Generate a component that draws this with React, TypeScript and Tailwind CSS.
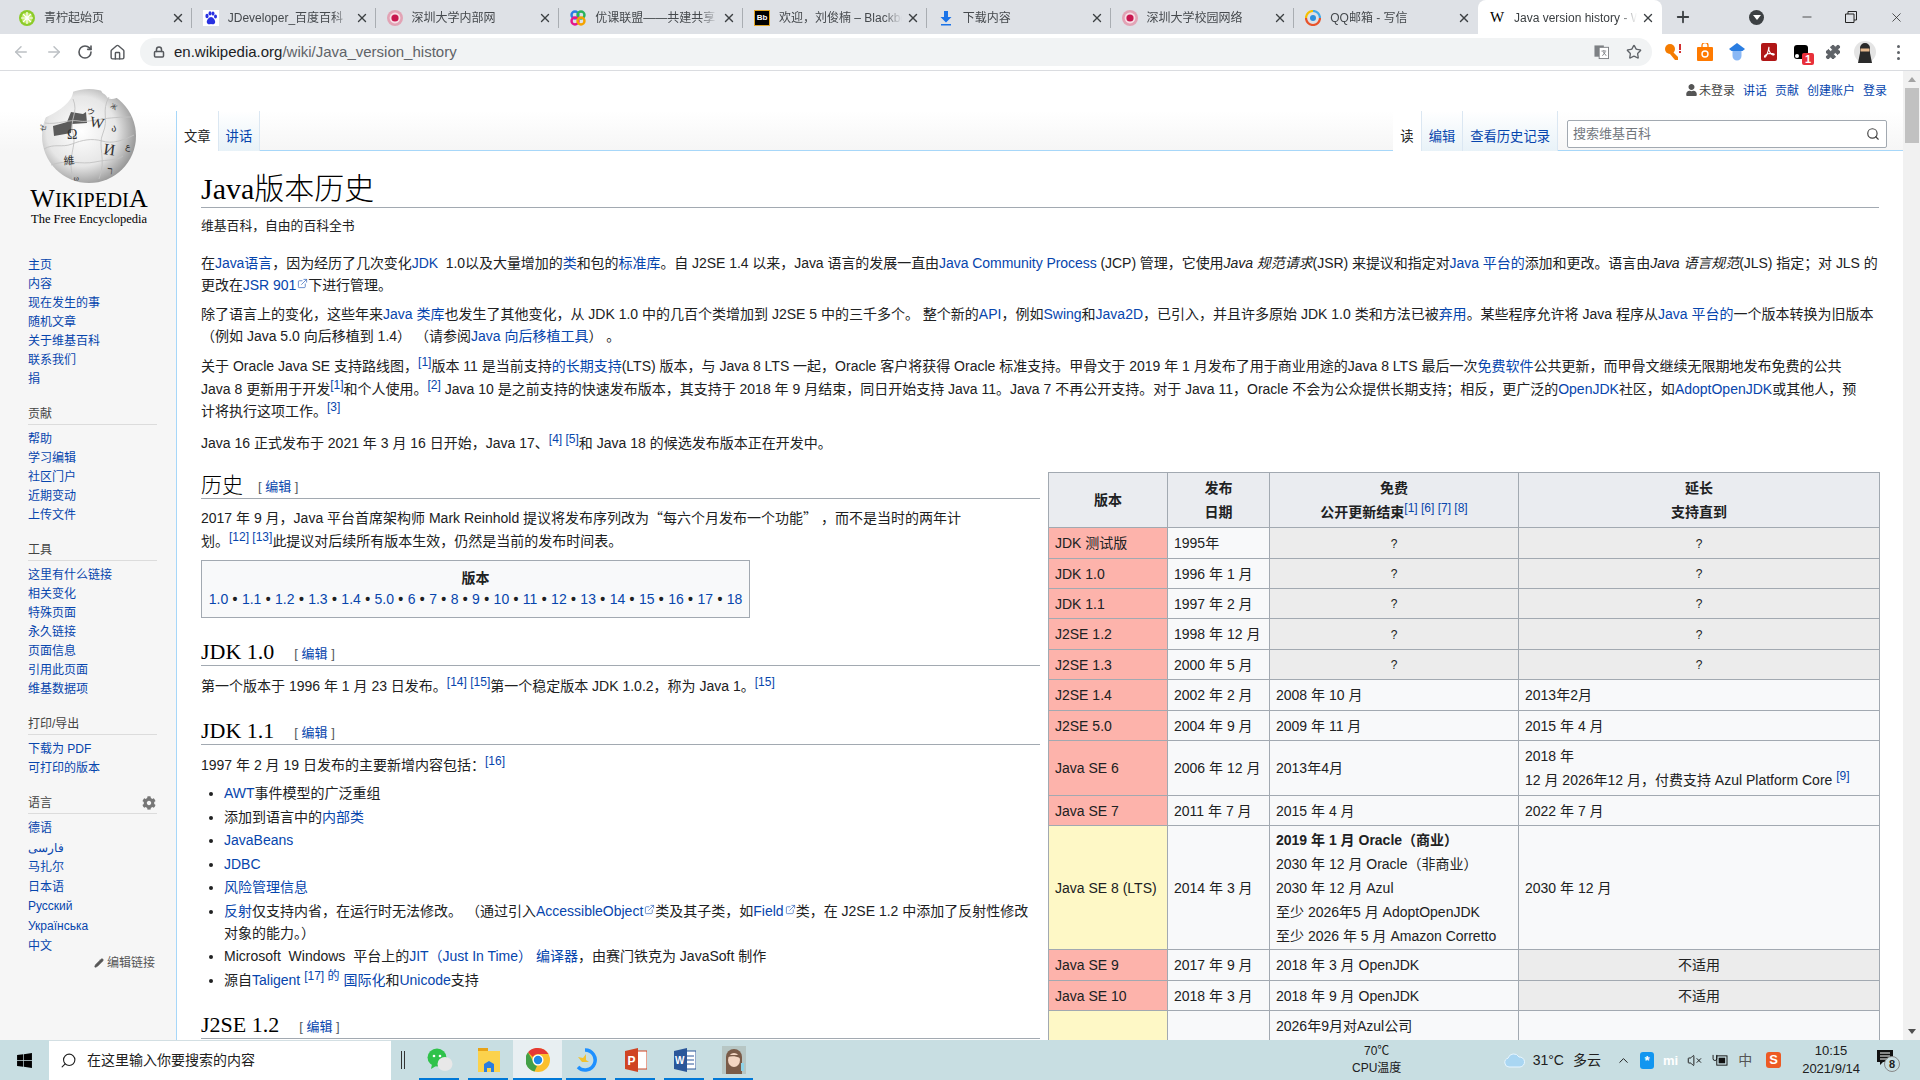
import React from 'react';
import { ArrowLeft, ArrowRight, RotateCw, Home, Lock, Star, Puzzle, Search, Plus, X, Minus, Pencil, ChevronUp, ExternalLink, VolumeX } from 'lucide-react';
import { FaWindows, FaUser, FaCog } from 'react-icons/fa';

const L = ({ children }: { children: React.ReactNode }) => <a className="text-[#0645ad]">{children}</a>;
const Sup = ({ children }: { children: React.ReactNode }) => <sup className="text-[#0645ad] text-[12px] leading-none top-0 align-[5px] not-italic font-normal">{children}</sup>;
const Ext = () => <ExternalLink className="inline-block w-[11px] h-[11px] text-[#3366bb] align-[1px] ml-[1px]" strokeWidth={1.6} />;
const Q = ({ children }: { children: React.ReactNode }) => <span className="font-['Noto_Sans_CJK_SC',sans-serif]">{children}</span>;

const Pink = () => (
  <svg viewBox="0 0 16 16" className="w-4 h-4"><circle cx="8" cy="8" r="8" fill="#e2a3b5" /><circle cx="8" cy="8" r="5.4" fill="#f6dfe6" /><circle cx="8" cy="8" r="3.6" fill="#c8174f" /></svg>
);
const favicons: React.ReactNode[] = [
  <svg viewBox="0 0 16 16" className="w-4 h-4"><circle cx="8" cy="8" r="8" fill="#8ccb2a" /><circle cx="8" cy="8" r="5.5" fill="#c5e96b" /><path d="M8 2v12M2 8h12M4 4l8 8M12 4l-8 8" stroke="#fff" strokeWidth="1.2" /></svg>,
  <svg viewBox="0 0 16 16" className="w-4 h-4"><rect width="16" height="16" fill="#fff" /><ellipse cx="4" cy="6" rx="1.6" ry="2.2" fill="#2932e1" /><ellipse cx="7" cy="3.4" rx="1.5" ry="2.1" fill="#2932e1" /><ellipse cx="10" cy="3.6" rx="1.5" ry="2.1" fill="#2932e1" /><ellipse cx="12.5" cy="6.5" rx="1.5" ry="2.1" fill="#2932e1" /><path d="M8 7c-2 0-5 3.500-4 6 1 2 3 1 4 1s3 1 4-1c1-2.500-2-6-4-6z" fill="#2932e1" /></svg>,
  <Pink />,
  <svg viewBox="0 0 16 16" className="w-4 h-4" fill="none" strokeWidth="2.4"><circle cx="5" cy="5" r="3.5" stroke="#2a7de1" /><circle cx="11" cy="5" r="3.500" stroke="#29b35b" /><circle cx="5" cy="11" r="3.500" stroke="#e5168a" /><circle cx="11" cy="11" r="3.500" stroke="#f5a300" /></svg>,
  <div className="w-4 h-4 bg-black border border-[#e0a526] flex items-center justify-center text-white text-[8px] font-bold leading-none">Bb</div>,
  <svg viewBox="0 0 16 16" className="w-4 h-4"><path d="M6 1h4v6h3.500L8 12.500 2.500 7H6zM3 14h10v1.500H3z" fill="#1a73e8" /></svg>,
  <Pink />,
  <svg viewBox="0 0 16 16" className="w-4 h-4" fill="none"><path d="M8 1a7 7 0 0 0-7 7" stroke="#f6c000" strokeWidth="2.200" /><path d="M8 1a7 7 0 0 1 7 7" stroke="#43a9e8" strokeWidth="2.200" /><path d="M15 8a7 7 0 0 1-14 0" stroke="#e8532b" strokeWidth="2.200" /><circle cx="8" cy="8" r="3" fill="#2e8fdc" /></svg>,
  <span className="w-4 h-4 flex items-center justify-center text-[15px] leading-none text-black font-['Liberation_Serif',serif]">W</span>,
];
const tabs = ['青柠起始页', 'JDeveloper_百度百科', '深圳大学内部网', '优课联盟——共建共享', '欢迎，刘俊楠 – Blackboard Learn', '下载内容', '深圳大学校园网络', 'QQ邮箱 - 写信', 'Java version history - Wikipedia'];

function TabStrip() {
  return (
    <div className="h-[34px] shrink-0 bg-[#dee1e6] flex items-stretch pl-[8px]">
      {tabs.map((t, i) => {
        const active = i === 8;
        const sepHidden = i === 7 || i === 8;
        return (
          <div key={i} className={`w-[183.75px] shrink-0 flex items-center pl-[11px] pr-[7px] pt-[1px] relative text-[12px] ${active ? 'bg-white rounded-t-[8px] text-[#3c4043]' : 'text-[#45494d]'}`}>
            <span className="w-4 h-4 shrink-0 mr-[9px] flex items-center justify-center">{favicons[i]}</span>
            <span className="flex-1 overflow-hidden whitespace-nowrap [mask-image:linear-gradient(to_right,#000_85%,transparent)]">{t}</span>
            <X className="w-[14px] h-[14px] shrink-0 ml-[4px] text-[#3c4043]" strokeWidth={2.4} />
            {!sepHidden && <span className="absolute right-0 top-[8px] h-[20px] w-px bg-[#a9adb2]" />}
          </div>
        );
      })}
      <div className="w-[42px] flex items-center justify-center"><Plus className="w-[18px] h-[18px] text-[#3c4043]" strokeWidth={2.4} /></div>
      <div className="flex-1 flex items-center justify-end pr-[16px]">
        <span className="w-[15px] h-[15px] rounded-full bg-[#3c4043] flex items-center justify-center mr-[36px]"><span className="w-0 h-0 border-x-[4px] border-x-transparent border-t-[5px] border-t-white" /></span>
        <Minus className="w-[14px] h-[14px] text-[#222] mr-[31px]" strokeWidth={1.3} />
        <svg viewBox="0 0 12 12" className="w-[12px] h-[12px] mr-[32px]" fill="none" stroke="#222"><path d="M3 3V.5h8.500V9H9M.5 3h8.500v8.500H.5z" /></svg>
        <X className="w-[15px] h-[15px] text-[#222]" strokeWidth={1.2} />
      </div>
    </div>
  );
}

function Toolbar() {
  return (
    <div className="h-[37px] shrink-0 bg-white border-b border-[#dadce0] flex items-center pl-[12px]">
      <ArrowLeft className="w-[18px] h-[18px] text-[#bcc0c4] mr-[15px]" strokeWidth={2} />
      <ArrowRight className="w-[18px] h-[18px] text-[#bcc0c4] mr-[14px]" strokeWidth={2} />
      <RotateCw className="w-[16px] h-[16px] text-[#55585c] mr-[16px]" strokeWidth={2.4} />
      <Home className="w-[17px] h-[17px] text-[#55585c] mr-[14px]" strokeWidth={2} />
      <div className="w-[1512px] shrink-0 h-[28px] rounded-full bg-[#f1f3f4] flex items-center pl-[13px] pr-[10px]">
        <Lock className="w-[12px] h-[12px] text-[#55585c] mr-[9px]" strokeWidth={3} />
        <span className="text-[15px] text-[#202124]">en.wikipedia.org<span className="text-[#5f6368]">/wiki/Java_version_history</span></span>
        <span className="flex-1" />
        <svg viewBox="0 0 16 16" className="w-[15px] h-[16px] mr-[17px]"><rect x="0.500" y="1" width="10" height="12" fill="#7d8084" /><rect x="5.500" y="3" width="10" height="12" fill="#fff" stroke="#7d8084" /><path d="M8 7h5M10.500 6v1M9 12l3-4M10 8l3 4" stroke="#7d8084" /></svg>
        <Star className="w-[16px] h-[16px] text-[#5f6368]" strokeWidth={2} />
      </div>
      <div className="flex items-center ml-[5px]">
        <span className="w-[32px] flex justify-center">
          <svg viewBox="0 0 18 18" className="w-[18px] h-[18px]"><circle cx="6" cy="6" r="5" fill="#f57c00" /><path d="M8 8l6 6v3h-3l-5-6z" fill="#f57c00" /><rect x="15" y="1" width="2" height="6" fill="#d32f2f" /><rect x="15" y="8" width="2" height="2" fill="#d32f2f" /></svg>
        </span>
        <span className="w-[32px] flex justify-center">
          <svg viewBox="0 0 16 18" className="w-[16px] h-[18px]"><rect y="4" width="16" height="14" rx="1" fill="#ff7a00" /><path d="M5 5V2.500a3 3 0 0 1 6 0V5" fill="none" stroke="#ff7a00" strokeWidth="1.300" /><circle cx="8" cy="11" r="3" fill="none" stroke="#fff" strokeWidth="1.400" /></svg>
        </span>
        <span className="w-[32px] flex justify-center">
          <svg viewBox="0 0 16 18" className="w-[16px] h-[18px]"><path d="M8 0l8 6-2.500 2h-11L0 6z" fill="#2a7de1" /><path d="M3.500 8h9v5a4.500 4.500 0 0 1-9 0z" fill="#8ab8f5" /></svg>
        </span>
        <span className="w-[32px] flex justify-center">
          <span className="w-[16px] h-[18px] bg-[#b01616] rounded-[2px] flex items-center justify-center">
            <svg viewBox="0 0 14 14" className="w-[12px] h-[12px]" fill="none" stroke="#fff" strokeWidth="1.300"><path d="M7 1c-1 3 0 5 1.500 7S12 11 13 10 9 8 6 9 1 12 2 13s4-5 5-12z" /></svg>
          </span>
        </span>
        <span className="w-[32px] flex justify-center relative">
          <span className="w-[14px] h-[14px] bg-black rounded-[3px] relative"><span className="absolute left-[1px] bottom-[1px] w-[4px] h-[4px] rounded-full bg-white" /></span>
          <span className="absolute left-[17px] top-[8px] w-[12px] h-[12px] rounded-[2px] bg-[#e8303a] text-white text-[11px] font-bold leading-[12px] text-center">1</span>
        </span>
        <span className="w-[32px] flex justify-center"><Puzzle className="w-[16px] h-[16px] text-[#5f6368] fill-[#5f6368]" strokeWidth={1.5} /></span>
        <span className="w-[32px] flex justify-center">
          <svg viewBox="0 0 22 22" className="w-[22px] h-[22px]"><circle cx="11" cy="11" r="11" fill="#e4e4e4" /><path d="M6 7a5 5 0 0 1 10 0v5l2 10H4l2-10z" fill="#2a2a2a" /><rect x="6.500" y="7.500" width="9" height="3" fill="#e7b98e" /></svg>
        </span>
        <span className="w-[34px] flex flex-col items-center gap-[3px]">
          <span className="w-[3px] h-[3px] rounded-full bg-[#5f6368]" /><span className="w-[3px] h-[3px] rounded-full bg-[#5f6368]" /><span className="w-[3px] h-[3px] rounded-full bg-[#5f6368]" />
        </span>
      </div>
    </div>
  );
}

function Globe() {
  const t = (x: number, y: number, s: string, size: number, r = 0) => (
    <text x={x} y={y} fontSize={size} fill="#333" fontFamily="'Liberation Serif','Noto Sans CJK SC',serif" transform={`rotate(${r} ${x} ${y})`}>{s}</text>
  );
  return (
    <svg viewBox="0 0 100 94" className="w-[100px] h-[94px]">
      <defs>
        <radialGradient id="wg" cx="42%" cy="45%" r="62%"><stop offset="0%" stopColor="#fff" /><stop offset="60%" stopColor="#e6e6e6" /><stop offset="100%" stopColor="#8d8d8d" /></radialGradient>
      </defs>
      <circle cx="50" cy="47" r="47" fill="url(#wg)" />
      <path d="M3 30C18 24 36 12 34 0H20L2 25zM62 0c0 5 4 4 6 8 3 4 10 1 14-1L72 0z" fill="#fff" />
      <path d="M14 37l14-4 4-10 12 2 3-2 1 11-15 1-1 9-17 3z" fill="#5b5b5b" />
      <g fill="none" stroke="#c2c2c2" strokeWidth="0.900">
        <path d="M5 60c10-6 18-1 28-5s20-6 30-3 20 0 32-6" />
        <path d="M34 10c6 14-4 20 0 34s-6 22 0 46" />
        <path d="M70 8c-8 14 0 22-6 36s4 26-4 46" />
        <path d="M6 34c12 2 24-4 34-2s22-4 52-4" />
        <path d="M12 76c16-6 30 0 44-3s22-1 28-6" />
      </g>
      {t(28, 50, 'Ω', 14)}
      {t(50, 37, 'W', 15, 12)}
      {t(64, 65, 'И', 16, 8)}
      {t(25, 76, '維', 11, -6)}
      {t(47, 24, 'ウ', 8, 20)}
      {t(72, 42, 'ა', 10, 10)}
      {t(6, 43, 'ゼ', 7, -80)}
      {t(68, 85, 'ר', 11, 6)}
      {t(35, 92, 'ω', 8, -10)}
      {t(86, 60, 'ع', 9, 10)}
      {t(71, 18, 'Ж', 7, 30)}
    </svg>
  );
}

const sideSections: { title?: string; items: string[]; gear?: boolean; mt: string; li: string }[] = [
  { items: ['主页', '内容', '现在发生的事', '随机文章', '关于维基百科', '联系我们', '捐'], mt: '', li: 'h-[19px] leading-[19px]' },
  { title: '贡献', items: ['帮助', '学习编辑', '社区门户', '近期变动', '上传文件'], mt: 'mt-[16px]', li: 'h-[19px] leading-[19px]' },
  { title: '工具', items: ['这里有什么链接', '相关变化', '特殊页面', '永久链接', '页面信息', '引用此页面', '维基数据项'], mt: 'mt-[16px]', li: 'h-[19px] leading-[19px]' },
  { title: '打印/导出', items: ['下载为 PDF', '可打印的版本'], mt: 'mt-[16px]', li: 'h-[19px] leading-[19px]' },
  { title: '语言', items: ['德语', 'فارسی', '马扎尔', '日本语', 'Русский', 'Українська', '中文'], gear: true, mt: 'mt-[16px]', li: 'h-[19.6px] leading-[19.6px]' },
];

function Sidebar() {
  return (
    <div className="w-[176px] shrink-0 bg-[#f6f6f6] bg-[linear-gradient(#fff_50%,#f6f6f6_100%)] bg-no-repeat bg-[length:100%_80px] text-[12px]">
      <div className="h-[185px] flex flex-col items-center pt-[18px] pl-[2px]">
        <Globe />
        <div className="mt-[5px] text-[26px] leading-[22px] text-black font-['Liberation_Serif',serif] whitespace-nowrap">W<span className="text-[20.500px]">IKIPEDI</span>A</div>
        <div className="mt-[1px] text-[12.500px] leading-[14px] text-black font-['Liberation_Serif',serif] whitespace-nowrap">The Free Encyclopedia</div>
      </div>
      <div className="pl-[28px] pr-[19px]">
        {sideSections.map((s, i) => (
          <div key={i} className={s.mt}>
            {s.title && (
              <div className="h-[20px] leading-[19px] border-b border-[#dcdcdc] text-[#444] flex justify-between items-center mb-[5px]">
                <span>{s.title}</span>
                {s.gear && <FaCog className="w-[14px] h-[14px] text-[#777] mr-[1px] -mt-[2px]" />}
              </div>
            )}
            <ul>{s.items.map((x) => <li key={x} className={`${s.li} text-[#0645ad] whitespace-nowrap`}>{x}</li>)}</ul>
          </div>
        ))}
        <div className="flex items-center justify-end gap-[3px] text-[#444] mr-[2px] h-[14px]">
          <Pencil className="w-[10px] h-[10px] text-[#555] fill-[#555]" />
          <span className="text-[#555]">编辑链接</span>
        </div>
      </div>
    </div>
  );
}

function TabLabel({ children, active, first }: { children: React.ReactNode; active?: boolean; first?: boolean }) {
  return (
    <div className={`h-[40px] px-[7px] -mb-px pt-[16px] text-[13.300px] leading-[20px] whitespace-nowrap border-r border-[#dbe7f2] ${active ? 'bg-white text-[#222]' : 'bg-[linear-gradient(#fff,#e8f2f8)] text-[#0645ad]'} ${first ? 'border-l border-l-[#a7d7f9]' : ''}`}>{children}</div>
  );
}

function Header() {
  return (
    <div className="h-[80px] shrink-0 bg-[linear-gradient(#fff_50%,#f6f6f6_100%)] border-b border-[#a7d7f9] flex flex-col justify-between relative">
      <div className="flex justify-end items-center gap-[8px] pt-[12px] pr-[16px] text-[12px] leading-[16px] text-[#444]">
        <span className="flex items-center gap-[2px]"><FaUser className="w-[11px] h-[12px] -mt-[3px] text-[#555]" /> 未登录</span>
        <span className="text-[#0645ad]">讲话</span>
        <span className="text-[#0645ad]">贡献</span>
        <span className="text-[#0645ad]">创建账户</span>
        <span className="text-[#0645ad]">登录</span>
      </div>
      <div className="flex justify-between items-end">
        <div className="flex">
          <TabLabel active first>文章</TabLabel>
          <TabLabel>讲话</TabLabel>
        </div>
        <div className="flex items-end">
          <TabLabel active>读</TabLabel>
          <TabLabel>编辑</TabLabel>
          <TabLabel>查看历史记录</TabLabel>
          <div className="ml-[9px] mr-[16px] mb-[2px] w-[320px] h-[28px] bg-white border border-[#a2a9b1] rounded-[2px] flex items-center justify-between pl-[5px] pr-[6px]">
            <span className="text-[13px] text-[#72777d]">搜索维基百科</span>
            <Search className="w-[14px] h-[14px] text-[#444]" strokeWidth={2} />
          </div>
        </div>
      </div>
    </div>
  );
}

function H({ children, wide }: { children: React.ReactNode; wide?: boolean }) {
  return (
    <h2 className={`h-[27px] border-b border-[#a2a9b1] leading-[26px] text-black font-['Liberation_Serif','Noto_Sans_CJK_SC',serif] font-light whitespace-nowrap flex items-end ${wide ? 'text-[22px]' : 'text-[21px]'}`}>
      <span>{children}</span>
      <span className={`mb-[1px] text-[13px] leading-[20px] font-normal text-[#54595d] font-['Liberation_Sans','Noto_Sans_CJK_SC',sans-serif] ${wide ? 'ml-[20px]' : 'ml-[15px]'}`}>[ <span className="text-[#0645ad]">编辑</span> ]</span>
    </h2>
  );
}

type Row = { h: string; a: string; tone: string; b: string; c: React.ReactNode; d: React.ReactNode; cg?: boolean; dg?: boolean };
const RED = 'bg-[#fdb3ab]';
const YEL = 'bg-[#fef8c6]';
const q = <span className="text-[12px]">?</span>;
const rows: Row[] = [
  { h: 'h-[31px]', a: 'JDK 测试版', tone: RED, b: '1995年', c: q, d: q, cg: true, dg: true },
  { h: 'h-[30px]', a: 'JDK 1.0', tone: RED, b: '1996 年 1 月', c: q, d: q, cg: true, dg: true },
  { h: 'h-[30px]', a: 'JDK 1.1', tone: RED, b: '1997 年 2 月', c: q, d: q, cg: true, dg: true },
  { h: 'h-[31px]', a: 'J2SE 1.2', tone: RED, b: '1998 年 12 月', c: q, d: q, cg: true, dg: true },
  { h: 'h-[30px]', a: 'J2SE 1.3', tone: RED, b: '2000 年 5 月', c: q, d: q, cg: true, dg: true },
  { h: 'h-[31px]', a: 'J2SE 1.4', tone: RED, b: '2002 年 2 月', c: '2008 年 10 月', d: '2013年2月' },
  { h: 'h-[30px]', a: 'J2SE 5.0', tone: RED, b: '2004 年 9 月', c: '2009 年 11 月', d: '2015 年 4 月' },
  { h: 'h-[55px]', a: 'Java SE 6', tone: RED, b: '2006 年 12 月', c: '2013年4月', d: <>2018 年<br />12 月 2026年12 月，付费支持 Azul Platform Core <Sup>[9]</Sup></> },
  { h: 'h-[30px]', a: 'Java SE 7', tone: RED, b: '2011 年 7 月', c: '2015 年 4 月', d: '2022 年 7 月' },
  { h: 'h-[124px]', a: 'Java SE 8 (LTS)', tone: YEL, b: '2014 年 3 月', c: <><b>2019 年 1 月 Oracle（商业）</b><br />2030 年 12 月 Oracle（非商业）<br />2030 年 12 月 Azul<br />至少 2026年5 月 AdoptOpenJDK<br />至少 2026 年 5 月 Amazon Corretto</>, d: '2030 年 12 月' },
  { h: 'h-[31px]', a: 'Java SE 9', tone: RED, b: '2017 年 9 月', c: '2018 年 3 月 OpenJDK', d: '不适用', dg: true },
  { h: 'h-[30px]', a: 'Java SE 10', tone: RED, b: '2018 年 3 月', c: '2018 年 9 月 OpenJDK', d: '不适用', dg: true },
  { h: 'h-[60px]', a: '', tone: YEL, b: '', c: <div>2026年9月对Azul公司</div>, d: '' },
];

function VersionTable() {
  const border = 'border border-[#a2a9b1]';
  const th = `${border} bg-[#eaecf0] font-bold text-center px-[6px] text-[#202122]`;
  const td = `${border} bg-[#f8f9fa] px-[6px] whitespace-nowrap`;
  return (
    <table className="w-[831px] shrink-0 table-fixed border-collapse text-[14px] leading-[24px] self-start text-[#202122]">
      <colgroup><col className="w-[119px]" /><col className="w-[102px]" /><col className="w-[249px]" /><col className="w-[361px]" /></colgroup>
      <thead>
        <tr className="h-[55px]">
          <th className={th}>版本</th>
          <th className={th}>发布<br />日期</th>
          <th className={th}>免费<br />公开更新结束<Sup>[1] [6] [7] [8]</Sup></th>
          <th className={th}>延长<br />支持直到</th>
        </tr>
      </thead>
      <tbody>
        {rows.map((r, i) => (
          <tr key={i} className={r.h}>
            <td className={`${border} ${r.tone} px-[6px] whitespace-nowrap`}>{r.a}</td>
            <td className={td}>{r.b}</td>
            <td className={r.cg ? `${border} bg-[#ececec] text-center` : i === 12 ? `${td} align-top pt-[3px]` : td}>{r.c}</td>
            <td className={r.dg ? `${border} bg-[#ececec] text-center` : td}>{r.d}</td>
          </tr>
        ))}
      </tbody>
    </table>
  );
}

const versions = ['1.0', '1.1', '1.2', '1.3', '1.4', '5.0', '6', '7', '8', '9', '10', '11', '12', '13', '14', '15', '16', '17', '18'];

function Article() {
  return (
    <div className="flex-1 min-w-0 bg-white pl-[24px] pr-[24px] border-l border-[#a7d7f9] text-[14px] leading-[22px] text-[#202122]">
      <h1 className="mt-[20px] h-[37px] border-b border-[#a2a9b1] text-[30px] leading-[36px] text-black font-['Liberation_Serif','Noto_Sans_CJK_SC',serif] font-light">Java版本历史</h1>
      <div className="mt-[8px] text-[12.800px] leading-[20px]">维基百科，自由的百科全书</div>
      <p className="mt-[16px] whitespace-nowrap tracking-[-0.05px]">在<L>Java语言</L>，因为经历了几次变化<L>JDK</L> &nbsp;1.0以及大量增加的<L>类</L>和包的<L>标准库</L>。自 J2SE 1.4 以来，Java 语言的发展一直由<L>Java Community Process</L> (JCP) 管理，它使用<i>Java 规范请求</i>(JSR) 来提议和指定对<L>Java 平台的</L>添加和更改。语言由<i>Java 语言规范</i>(JLS) 指定；对 JLS 的<br />更改在<L>JSR 901</L><Ext />下进行管理。</p>
      <p className="mt-[7px] whitespace-nowrap">除了语言上的变化，这些年来<L>Java 类库</L>也发生了其他变化，从 JDK 1.0 中的几百个类增加到 J2SE 5 中的三千多个。 整个新的<L>API</L>，例如<L>Swing</L>和<L>Java2D</L>，已引入，并且许多原始 JDK 1.0 类和方法已被<L>弃用</L>。某些程序允许将 Java 程序从<L>Java 平台的</L>一个版本转换为旧版本<br />（例如 Java 5.0 向后移植到 1.4） （请参阅<L>Java 向后移植工具</L>） 。</p>
      <p className="mt-[8px] leading-[22.500px] whitespace-nowrap">关于 Oracle Java SE 支持路线图，<Sup>[1]</Sup>版本 11 是当前支持<L>的长期支持</L>(LTS) 版本，与 Java 8 LTS 一起，Oracle 客户将获得 Oracle 标准支持。甲骨文于 2019 年 1 月发布了用于商业用途的Java 8 LTS 最后一次<L>免费软件</L>公共更新，而甲骨文继续无限期地发布免费的公共<br />Java 8 更新用于开发<Sup>[1]</Sup>和个人使用。<Sup>[2]</Sup> Java 10 是之前支持的快速发布版本，其支持于 2018 年 9 月结束，同日开始支持 Java 11。Java 7 不再公开支持。对于 Java 11，Oracle 不会为公众提供长期支持；相反，更广泛的<L>OpenJDK</L>社区，如<L>AdoptOpenJDK</L>或其他人，预<br />计将执行这项工作。<Sup>[3]</Sup></p>
      <p className="mt-[9px]">Java 16 正式发布于 2021 年 3 月 16 日开始，Java 17、<Sup>[4] [5]</Sup>和 Java 18 的候选发布版本正在开发中。</p>
      <div className="mt-[18.500px] flex gap-[8px] items-start">
        <div className="w-[839px] shrink-0">
          <H>历史</H>
          <p className="mt-[7px] leading-[23px] whitespace-nowrap">2017 年 9 月，Java 平台首席架构师 Mark Reinhold 提议将发布序列改为<Q>“</Q>每六个月发布一个功能<Q>”</Q> ，而不是当时的两年计<br />划。<Sup>[12] [13]</Sup>此提议对后续所有版本生效，仍然是当前的发布时间表。</p>
          <div className="mt-[7px] w-[549px] h-[58px] bg-[#f8f9fa] border border-[#a2a9b1] text-center flex flex-col justify-center">
            <div className="font-bold leading-[21px]">版本</div>
            <div className="leading-[21px] whitespace-nowrap">
              {versions.map((v, i) => <span key={v}>{i > 0 && <b className="text-[#202122] mx-[0.5px]"> • </b>}<L>{v}</L></span>)}
            </div>
          </div>
          <div className="mt-[21px]"><H wide>JDK 1.0</H></div>
          <p className="mt-[9px]">第一个版本于 1996 年 1 月 23 日发布。<Sup>[14] [15]</Sup>第一个稳定版本 JDK 1.0.2，称为 Java 1。<Sup>[15]</Sup></p>
          <div className="mt-[21px]"><H wide>JDK 1.1</H></div>
          <p className="mt-[9px]">1997 年 2 月 19 日发布的主要新增内容包括：<Sup>[16]</Sup></p>
          <ul className="mt-[6px] ml-[23px] list-disc space-y-[1.500px]">
            <li><L>AWT</L>事件模型的广泛重组</li>
            <li>添加到语言中的<L>内部类</L></li>
            <li><L>JavaBeans</L></li>
            <li><L>JDBC</L></li>
            <li><L>风险管理信息</L></li>
            <li className="whitespace-nowrap"><L>反射</L>仅支持内省，在运行时无法修改。 （通过引入<L>AccessibleObject</L><Ext />类及其子类，如<L>Field</L><Ext />类，在 J2SE 1.2 中添加了反射性修改<br />对象的能力。）</li>
            <li>Microsoft&nbsp; Windows&nbsp; 平台上的<L>JIT（Just In Time） 编译器</L>，由赛门铁克为 JavaSoft 制作</li>
            <li>源自<L>Taligent</L> <Sup>[17] 的</Sup> <L>国际化</L>和<L>Unicode</L>支持</li>
          </ul>
          <div className="mt-[21px]"><H wide>J2SE 1.2</H></div>
        </div>
        <VersionTable />
      </div>
    </div>
  );
}

function Scrollbar() {
  return (
    <div className="w-[17px] shrink-0 bg-[#f1f1f1] flex flex-col items-center">
      <div className="h-[17px] flex items-center justify-center"><span className="w-0 h-0 border-x-[4px] border-x-transparent border-b-[5px] border-b-[#a3a3a3]" /></div>
      <div className="w-[14px] h-[55px] bg-[#c1c1c1]" />
      <div className="flex-1" />
      <div className="h-[17px] flex items-center justify-center"><span className="w-0 h-0 border-x-[4px] border-x-transparent border-t-[5px] border-t-[#505050]" /></div>
    </div>
  );
}

const Chrome = () => (
  <svg viewBox="0 0 24 24" className="w-[24px] h-[24px]">
    <circle cx="12" cy="12" r="12" fill="#fbc02d" />
    <path d="M12 0a12 12 0 0 1 10.400 6H12a6 6 0 0 0-5.200 3L2 4.200A12 12 0 0 1 12 0z" fill="#e53935" />
    <path d="M2 4.200l5 8.800a5.500 5.500 0 0 0 4 5l-2.500 5.500A12 12 0 0 1 2 4.200z" fill="#43a047" />
    <circle cx="12" cy="12" r="5.500" fill="#fff" /><circle cx="12" cy="12" r="4.200" fill="#1e88e5" />
  </svg>
);

const apps: { node: React.ReactNode; active?: boolean }[] = [
  { node: <svg viewBox="0 0 26 24" className="w-[26px] h-[24px]"><ellipse cx="10" cy="9.500" rx="9.500" ry="9" fill="#2fc24a" /><path d="M5 16l-1 5 5-3z" fill="#2fc24a" /><circle cx="7" cy="8" r="1.300" fill="#fff" /><circle cx="13" cy="8" r="1.300" fill="#fff" /><ellipse cx="18" cy="16" rx="7.500" ry="7" fill="#e8e8e8" /></svg> },
  { node: <svg viewBox="0 0 22 24" className="w-[22px] h-[24px]"><rect y="0" width="10" height="4" fill="#e8a317" /><rect y="3" width="22" height="21" fill="#fbd24c" /><path d="M6 24v-8l5-3 5 3v8h-3v-4H9v4z" fill="#2a7de1" /></svg> },
  { node: <Chrome />, active: true },
  { node: <svg viewBox="0 0 24 24" className="w-[24px] h-[24px]" fill="none"><path d="M10 2a10 10 0 1 1-7 17" stroke="#1e90ff" strokeWidth="3.500" /><path d="M3 9l5 1 3-4 0 6 3 2-7 0z" fill="#f2c230" /></svg> },
  { node: <svg viewBox="0 0 22 24" className="w-[22px] h-[24px]"><rect x="8" y="3" width="14" height="18" fill="#fff" stroke="#d04423" /><path d="M0 3l13-3v24L0 21z" fill="#d04423" /><text x="2.500" y="16.500" fontSize="12" fontWeight="bold" fill="#fff" fontFamily="'Liberation Sans',sans-serif">P</text></svg> },
  { node: <svg viewBox="0 0 22 24" className="w-[22px] h-[24px]"><rect x="8" y="3" width="14" height="18" fill="#fff" stroke="#2b579a" /><path d="M10 8h10M10 12h10M10 16h10" stroke="#2b579a" /><path d="M0 3l13-3v24L0 21z" fill="#2b579a" /><text x="1" y="16" fontSize="10" fontWeight="bold" fill="#fff" fontFamily="'Liberation Sans',sans-serif">W</text></svg> },
  { node: <svg viewBox="0 0 24 28" className="w-[24px] h-[28px]"><rect width="24" height="28" fill="#b7c6c4" /><path d="M4 28V11a8 8 0 0 1 16 0v17z" fill="#7a5b48" /><ellipse cx="12" cy="14" rx="6" ry="7" fill="#f3d6c3" /><path d="M6 11c3-1 8-1 12 1l0-3H6z" fill="#7a5b48" /><rect x="19" y="17" width="3" height="8" fill="#8fd3e8" /></svg> },
];

function Taskbar() {
  return (
    <div className="h-[40px] shrink-0 bg-[#c8dee2] flex items-stretch text-[#202020]">
      <div className="w-[49px] flex items-center justify-center"><FaWindows className="w-[17px] h-[17px] text-black" /></div>
      <div className="w-[342px] bg-white border-t border-[#d3dfe3] flex items-center pl-[11px] text-[14px]">
        <Search className="w-[17px] h-[17px] text-[#222] -scale-x-100 mr-[10px]" strokeWidth={1.6} />
        <span>在这里输入你要搜索的内容</span>
      </div>
      <div className="w-[24px] flex items-center justify-center"><span className="w-[4px] h-[18px] border-x border-[#333]" /></div>
      {apps.map((a, i) => (
        <div key={i} className={`w-[49px] flex items-center justify-center relative ${a.active ? 'bg-[#e8eff2]' : ''}`}>
          {a.node}
          <span className={`absolute bottom-0 h-[2px] bg-[#0078d7] ${a.active ? 'left-0 right-0' : 'left-[4px] right-[5px]'}`} />
        </div>
      ))}
      <div className="flex-1" />
      <div className="w-[80px] mr-[86px] flex flex-col items-center justify-center text-[12px] leading-[17px]"><span>70℃</span><span>CPU温度</span></div>
      <div className="flex items-center text-[14px] pr-[25px]">
        <svg viewBox="0 0 22 16" className="w-[22px] h-[16px] mr-[8px]"><path d="M6 15a4.500 4.500 0 0 1-1-8.800A6 6 0 0 1 16 5a5 5 0 0 1 1 10z" fill="#a9d6f2" stroke="#e8f6ff" /></svg>
        <span>31°C</span>
        <span className="ml-[9px] mr-[15px]">多云</span>
        <ChevronUp className="w-[15px] h-[15px] mr-[9px]" strokeWidth={1.6} />
        <span className="w-[14px] h-[17px] bg-[#1296f0] rounded-[3px] text-white text-[13px] leading-[18px] text-center font-bold mr-[9px]">*</span>
        <span className="text-white font-bold text-[13px] mr-[9px] leading-none">mi</span>
        <VolumeX className="w-[15px] h-[15px] mr-[10px]" strokeWidth={1.6} />
        <svg viewBox="0 0 18 14" className="w-[17px] h-[13px] mr-[9px]"><rect x="5" y="2" width="11" height="10" fill="none" stroke="#111" /><rect x="7" y="4" width="7" height="6" fill="#111" /><path d="M1 1v4a2 2 0 0 0 4 0V1" stroke="#111" fill="none" /></svg>
        <span className="text-[14px] text-[#555] mr-[14px]">中</span>
        <span className="w-[15px] h-[16px] bg-[#ed5a24] rounded-[3px] text-white text-[13px] leading-[16px] text-center font-bold mr-[21px]">S</span>
        <div className="flex flex-col items-center text-[13px] leading-[18px] mr-[17px]"><span>10:15</span><span>2021/9/14</span></div>
        <div className="relative w-[18px] h-[24px]">
          <svg viewBox="0 0 16 16" className="w-[16px] h-[16px] mt-[2px]"><path d="M0 0h16v12H6l-3 3v-3H0z" fill="#111" /><path d="M3 3h10M3 6h10M3 9h7" stroke="#fff" /></svg>
          <span className="absolute left-[7px] top-[8px] w-[16px] h-[16px] rounded-full bg-[#c8dee2] border border-[#888] text-[11px] leading-[14px] font-bold text-center">8</span>
        </div>
      </div>
    </div>
  );
}

export default function App() {
  return (
    <div className="w-[1920px] h-[1080px] overflow-hidden flex flex-col bg-white font-['Liberation_Sans','Noto_Sans_CJK_SC',sans-serif]">
      <TabStrip />
      <Toolbar />
      <div className="flex-1 min-h-0 flex overflow-hidden">
        <Sidebar />
        <div className="flex-1 min-w-0 flex flex-col h-[1500px]">
          <Header />
          <Article />
        </div>
        <div className="h-[969px] shrink-0 flex"><Scrollbar /></div>
      </div>
      <Taskbar />
    </div>
  );
}
